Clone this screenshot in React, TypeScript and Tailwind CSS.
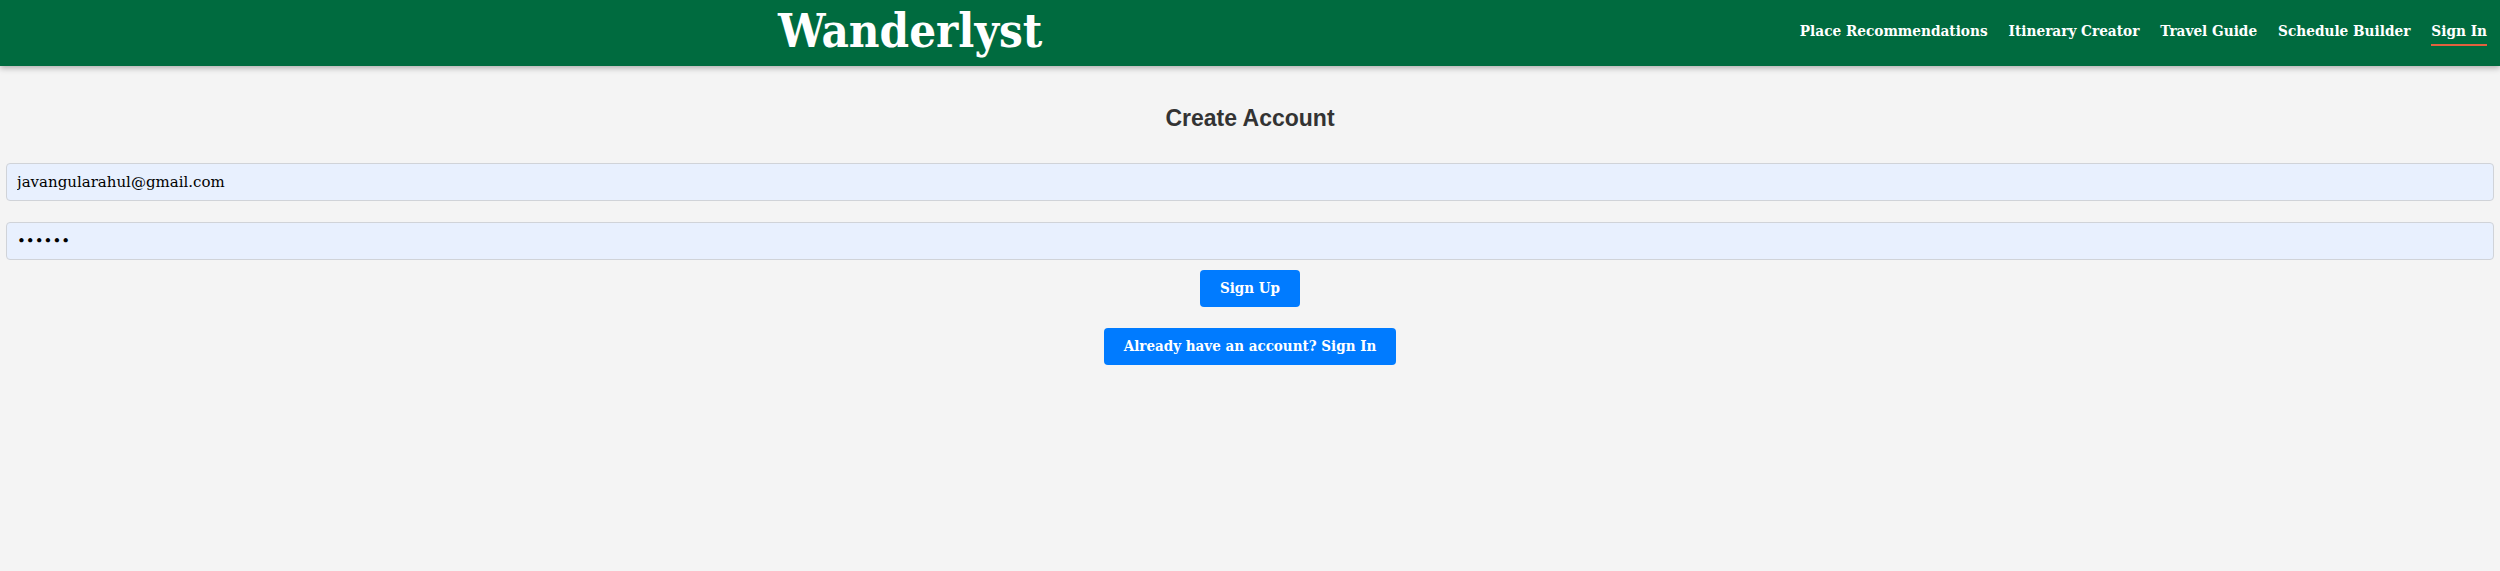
import React, { useState } from 'react';

const links = ['Place Recommendations', 'Itinerary Creator', 'Travel Guide', 'Schedule Builder'];

const serif = "font-['DejaVu_Serif_Condensed','DejaVu_Serif',serif]";

const Header: React.FC = () => {
  return (
    <header className="h-[66px] bg-[#006b3f] flex items-center justify-between pl-[778px] pr-[13px] shadow-[0_2px_6px_rgba(0,0,0,0.3)] relative z-10">
      <h1 className="text-white font-bold text-[47px] leading-none font-['DejaVu_Serif_Condensed','DejaVu_Serif',serif] -mt-[6px]">
        Wanderlyst
      </h1>
      <nav className="flex items-center gap-[21px] font-['DejaVu_Serif_Condensed','DejaVu_Serif',serif] font-bold text-[15.2px] text-white">
        {links.map((l) => (
          <a key={l} href="#" className="pb-[2px] border-b-2 border-transparent">
            {l}
          </a>
        ))}
        <a href="#" className="pb-[2px] border-b-2 border-[#e4603f]">
          Sign In
        </a>
      </nav>
    </header>
  );
};

export default function App() {
  const [email, setEmail] = useState('javangularahul@gmail.com');
  const [password, setPassword] = useState('123456');

  return (
    <div className="min-h-[571px] bg-[#f4f4f4]">
      <Header />
      <main className="px-[6px] pt-[38px]">
        <h2 className="text-center font-['Liberation_Sans',Arial,sans-serif] font-bold text-[23px] leading-[28px] text-[#333]">
          Create Account
        </h2>
        <form className="flex flex-col items-center mt-[31px]" onSubmit={(e) => e.preventDefault()}>
          <input
            type="email"
            value={email}
            onChange={(e) => setEmail(e.target.value)}
            className="w-full h-[38px] px-[10px] bg-[#e8f0fe] border border-[#d0d3d8] rounded-[4px] text-black text-[15px] font-['DejaVu_Serif',serif] outline-none"
          />
          <input
            type="password"
            value={password}
            onChange={(e) => setPassword(e.target.value)}
            className="w-full h-[38px] mt-[21px] px-[10px] bg-[#e8f0fe] border border-[#d0d3d8] rounded-[4px] text-black text-[15px] font-['DejaVu_Serif',serif] outline-none"
          />
          <button
            type="submit"
            className={`mt-[10px] h-[37px] px-[20px] bg-[#007bff] text-white rounded-[4px] ${serif} font-bold text-[15px]`}
          >
            Sign Up
          </button>
          <button
            type="button"
            className={`mt-[21px] h-[37px] px-[20px] bg-[#007bff] text-white rounded-[4px] ${serif} font-bold text-[15px]`}
          >
            Already have an account? Sign In
          </button>
        </form>
      </main>
    </div>
  );
}
